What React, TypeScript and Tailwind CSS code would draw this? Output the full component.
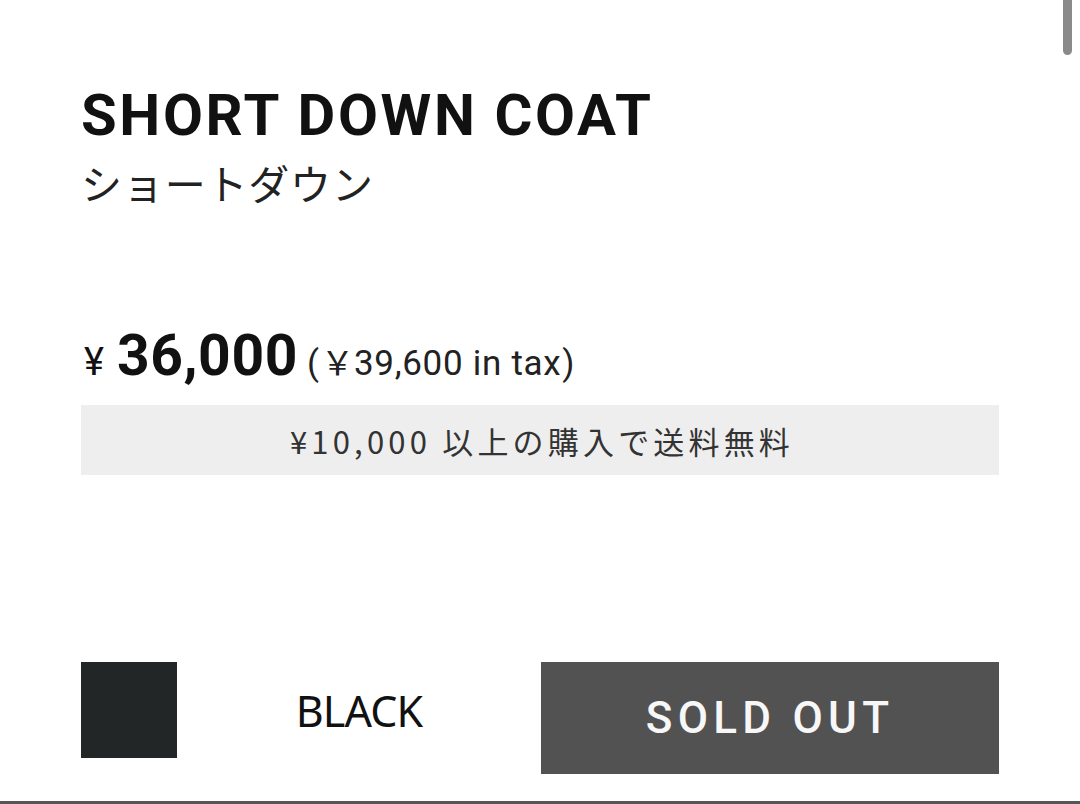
const product = {
  name: "SHORT DOWN COAT",
  nameJa: "ショートダウン",
  price: "36,000",
  taxIncluded: "39,600",
  color: "BLACK",
};

const App = () => {
  return (
    <div className="relative h-[804px] w-[1080px] overflow-hidden border-b-[3px] border-[#555555] bg-white">
      <div className="flex flex-col px-[81px] pt-[86px]">
        <h1 className="font-['Roboto',sans-serif] text-[58px] leading-none font-bold tracking-[0.045em] text-[#111111]">
          {product.name}
        </h1>
        <p className="mt-[18px] font-['Noto_Sans_CJK_JP',sans-serif] text-[41px] leading-none tracking-[0.02em] text-[#222222]">
          {product.nameJa}
        </p>

        <div className="mt-[124px] flex items-baseline font-['Roboto','Noto_Sans_CJK_JP',sans-serif] leading-none text-[#111111]">
          <span className="mr-[13px] ml-[3px] text-[38px] font-normal">¥</span>
          <span className="text-[57px] font-bold tracking-[0.01em]">
            {product.price}
          </span>
          <span className="ml-[9px] text-[35px] text-[#222222]">(</span>
          <span className="ml-[2px] font-['Noto_Sans_CJK_JP',sans-serif] text-[33px] text-[#222222]">
            ￥
          </span>
          <span className="text-[35px] tracking-[0.02em] text-[#222222]">
            {product.taxIncluded} in tax
          </span>
          <span className="ml-[1px] text-[35px] text-[#222222]">)</span>
        </div>

        <div className="mt-[21px] flex h-[70px] items-center justify-center bg-[#eeeeee]">
          <span className="pl-[4px] font-['Noto_Sans_CJK_JP',sans-serif] text-[31px] leading-none tracking-[0.135em] text-[#333333]">
            ¥10,000 以上の購入で送料無料
          </span>
        </div>

        <div className="mt-[187px] flex items-start">
          <div className="h-[96px] w-[96px] bg-[#222626]" />
          <div className="flex h-[96px] flex-1 items-center justify-center">
            <span className="font-['Noto_Sans',sans-serif] text-[43px] leading-none tracking-[-0.02em] text-[#111111]">
              {product.color}
            </span>
          </div>
          <button
            type="button"
            disabled
            className="flex h-[112px] w-[458px] items-center justify-center bg-[#525252] font-['Roboto',sans-serif] text-[44px] leading-none font-medium tracking-[0.12em] text-[#f7f7f7]"
          >
            SOLD OUT
          </button>
        </div>
      </div>

      <div className="absolute top-0 right-[8px] h-[55px] w-[9px] rounded-b-full bg-[#8a8a8a]" />
    </div>
  );
};

export default App;
